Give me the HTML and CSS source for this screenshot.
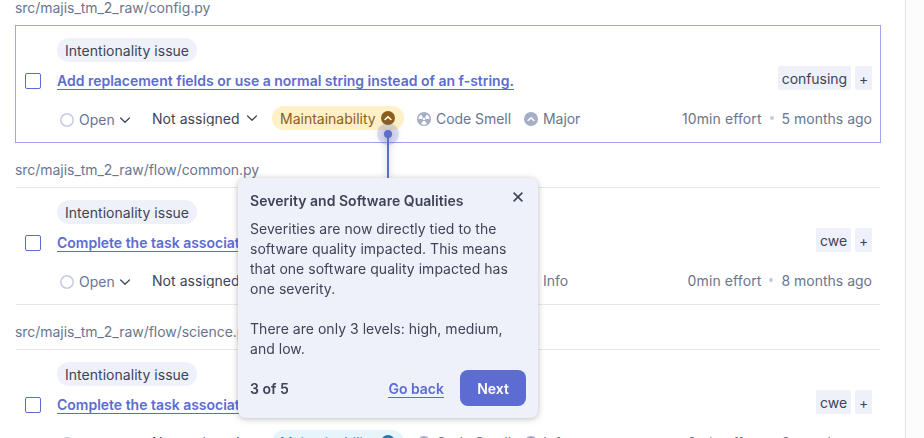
FILE: index.html
```html
<!DOCTYPE html>
<html lang="en">
<head>
<meta charset="utf-8">
<title>Issues</title>
<link rel="stylesheet" href="styles.css">
</head>
<body>
<svg width="0" height="0" class="defs">
  <symbol id="chevron" viewBox="0 0 12 12"><path d="M1.6 4 6 8.3 10.4 4" fill="none" stroke="currentColor" stroke-width="1.2" stroke-linecap="round" stroke-linejoin="round"/></symbol>
  <symbol id="ring" viewBox="0 0 14 14"><circle cx="7" cy="7" r="6.2" fill="none" stroke="currentColor" stroke-width="1.5"/></symbol>
  <symbol id="up" viewBox="0 0 14 14"><circle cx="7" cy="7" r="7" fill="currentColor"/><path d="M4.1 8.5 7 5.8 9.9 8.5" fill="none" stroke="#fff" stroke-width="1.6" stroke-linecap="round" stroke-linejoin="round"/></symbol>
  <symbol id="down" viewBox="0 0 14 14"><circle cx="7" cy="7" r="7" fill="currentColor"/><path d="M4.1 5.7 7 8.4 9.9 5.7" fill="none" stroke="#fff" stroke-width="1.6" stroke-linecap="round" stroke-linejoin="round"/></symbol>
  <symbol id="smell" viewBox="0 0 14 14"><circle cx="7" cy="7" r="7" fill="currentColor"/><g fill="#fff"><path d="M1.4 7a5.6 5.6 0 0 1 2.7-4.6L5.9 5.4A2 2 0 0 0 5 7z"/><path d="M12.6 7a5.6 5.6 0 0 0-2.7-4.6L8.1 5.4A2 2 0 0 1 9 7z"/><path d="M4.2 11.9a5.6 5.6 0 0 0 5.6 0L8 8.8a2 2 0 0 1-2 0z"/><circle cx="7" cy="7" r="1.3"/></g></symbol>
</svg>
<div class="page">
  <main class="issues">
    <section class="group">
      <h2 class="file">src/majis_tm_2_raw/config.py</h2>
      <article class="card selected">
        <span class="check"></span>
        <div class="body">
          <div><span class="clean">Intentionality issue</span></div>
          <div class="heading"><a class="title">Add replacement fields or use a normal string instead of an f-string.</a><div class="tags"><span class="tag">confusing</span><span class="tag plus">+</span></div></div>
          <div class="meta">
            <span class="status"><svg class="ic ring"><use href="#ring"/></svg>Open<svg class="chev"><use href="#chevron"/></svg></span>
            <span class="assignee"><span class="name">Not assigned</span><svg class="chev"><use href="#chevron"/></svg></span>
            <span class="quality medium">Maintainability<svg class="ic"><use href="#up"/></svg></span>
            <span class="kind smell"><svg class="ic"><use href="#smell"/></svg>Code Smell</span>
            <span class="kind"><svg class="ic"><use href="#up"/></svg>Major</span>
            <span class="info"><span class="effort">10min effort</span><i class="sep"></i>5 months ago</span>
          </div>
        </div>
      </article>
    </section>
    <section class="group">
      <h2 class="file">src/majis_tm_2_raw/flow/common.py</h2>
      <article class="card">
        <span class="check"></span>
        <div class="body">
          <div><span class="clean">Intentionality issue</span></div>
          <div class="heading"><a class="title">Complete the task associated to this TODO comment.</a><div class="tags"><span class="tag">cwe</span><span class="tag plus">+</span></div></div>
          <div class="meta">
            <span class="status"><svg class="ic ring"><use href="#ring"/></svg>Open<svg class="chev"><use href="#chevron"/></svg></span>
            <span class="assignee"><span class="name">Not assigned</span><svg class="chev"><use href="#chevron"/></svg></span>
            <span class="quality low">Maintainability<svg class="ic"><use href="#down"/></svg></span>
            <span class="kind smell"><svg class="ic"><use href="#smell"/></svg>Code Smell</span>
            <span class="kind"><svg class="ic"><use href="#down"/></svg>Info</span>
            <span class="info"><span class="effort">0min effort</span><i class="sep"></i>8 months ago</span>
          </div>
        </div>
      </article>
    </section>
    <section class="group">
      <h2 class="file">src/majis_tm_2_raw/flow/science.py</h2>
      <article class="card">
        <span class="check"></span>
        <div class="body">
          <div><span class="clean">Intentionality issue</span></div>
          <div class="heading"><a class="title">Complete the task associated to this TODO comment.</a><div class="tags"><span class="tag">cwe</span><span class="tag plus">+</span></div></div>
          <div class="meta">
            <span class="status"><svg class="ic ring"><use href="#ring"/></svg>Open<svg class="chev"><use href="#chevron"/></svg></span>
            <span class="assignee"><span class="name">Not assigned</span><svg class="chev"><use href="#chevron"/></svg></span>
            <span class="quality low">Maintainability<svg class="ic"><use href="#down"/></svg></span>
            <span class="kind smell"><svg class="ic"><use href="#smell"/></svg>Code Smell</span>
            <span class="kind"><svg class="ic"><use href="#down"/></svg>Info</span>
            <span class="info"><span class="effort">0min effort</span><i class="sep"></i>8 months ago</span>
          </div>
        </div>
      </article>
    </section>
  </main>
  <aside class="gutter"></aside>
</div>
<div class="tour">
  <svg class="pointer" viewBox="0 0 24 56"><circle cx="12" cy="12" r="11" fill="#5d6cd0" fill-opacity=".2"/><circle cx="12" cy="12" r="4" fill="#5d6cd0"/><path d="M12 12V56" stroke="#5d6cd0" stroke-width="2"/></svg>
  <div class="popover">
    <div class="pophead"><strong>Severity and Software Qualities</strong><svg class="close" viewBox="0 0 12 12"><path d="M1.6 1.6 10.4 10.4M10.4 1.6 1.6 10.4" stroke="currentColor" stroke-width="1.6"/></svg></div>
    <p>Severities are now directly tied to the software quality impacted. This means that one software quality impacted has one severity.</p>
    <p>There are only 3 levels: high, medium, and low.</p>
    <div class="actions"><span class="step">3 of 5</span><a class="back">Go back</a><button class="next">Next</button></div>
  </div>
</div>
</body>
</html>
```
FILE: styles.css
```css
* { box-sizing: border-box; }
body { margin: 0; width: 924px; height: 438px; overflow: hidden; background: #fff; color: #3e4357; font: 400 14px/20px Inter, "Liberation Sans", sans-serif; }
.defs { position: absolute; }
.page { display: flex; height: 438px; overflow: hidden; }
.issues { width: 905px; padding: 0 24px 0 15px; }
.gutter { flex: 1; border-left: 1px solid #dfe2f0; background: #fcfcfd; }
.group { height: 162px; }
.group:first-child { height: 160px; margin-top: -2px; margin-bottom: 2px; }
.file { margin: 0; height: 27px; font-size: 14px; line-height: 20px; font-weight: 400; letter-spacing: -.04px; color: #6a7590; }
.card { display: flex; height: 118px; padding: 12px 8px 12px 9px; border: 1px solid transparent; border-top-color: #e6e7ea; border-bottom-color: #e6e7ea; }
.card.selected { border-color: #9da6ea; }
.check { flex: none; width: 16px; height: 16px; margin: 35px 16px 0 0; border: 1px solid #5d6cd0; border-radius: 2px; }
.body { flex: 1; min-width: 0; }
.clean { display: block; width: 140px; height: 24px; padding: 0 8px; border-radius: 12px; line-height: 26px; letter-spacing: .03px; white-space: nowrap; background: #eef1fa; }
.heading { display: flex; justify-content: space-between; align-items: flex-start; height: 44px; padding-top: 4px; }
.title { height: 18px; margin-top: 6px; line-height: 18px; font-weight: 600; letter-spacing: -.01px; color: #5d6cd0; border-bottom: 1px solid #5d6cd0; }
.tags { display: flex; gap: 4px; }
.tag { height: 24px; padding: 0 4px; border-radius: 2px; line-height: 26px; letter-spacing: -.06px; background: #eef1fa; }
.plus { width: 17px; text-align: center; }
.meta { display: flex; align-items: center; height: 24px; color: #6a7590; }
.ic { flex: none; width: 14px; height: 14px; }
.chev { flex: none; width: 12px; height: 12px; color: #3e4357; }
.status { display: flex; align-items: center; width: 95px; height: 24px; padding: 3px 0 0 3px; }
.ring { margin-right: 5px; color: #c4cbe3; }
.status .chev { margin-left: 4px; }
.assignee { display: flex; align-items: center; width: 120px; color: #3e4357; }
.name { width: 88px; height: 16px; margin-right: 6px; overflow: hidden; line-height: 17px; letter-spacing: .05px; white-space: nowrap; }
.quality { display: flex; align-items: center; justify-content: space-between; width: 132px; height: 24px; padding: 2px 9px 0 8px; border-radius: 12px; }
.quality .ic { margin-top: -2px; }
.medium { background: #fff0c7; color: #8c5e1e; }
.low { background: #e6f4fb; color: #2f76a8; }
.kind { display: flex; align-items: center; gap: 5px; height: 24px; padding-top: 2px; letter-spacing: -.05px; }
.kind .ic { margin-top: -1px; color: #a6adc6; }
.smell { width: 107px; margin-left: 13px; }
.info { display: flex; align-items: center; height: 24px; padding-top: 2px; margin-left: auto; }
.effort { letter-spacing: .1px; }
.sep { width: 4px; height: 4px; margin: -3px 8px 0; border-radius: 50%; background: #c4cbe3; }
.tour { position: absolute; left: 238px; top: 122px; width: 300px; height: 296px; filter: drop-shadow(0 1px 3px rgba(30, 32, 45, .3)); }
.pointer { display: block; width: 24px; height: 56px; margin-left: 138px; }
.popover { height: 240px; padding: 12px; border-radius: 8px; background: #eef1fa; }
.pophead { display: flex; justify-content: space-between; height: 28px; line-height: 22px; }
.pophead strong { font-weight: 600; letter-spacing: .03px; }
.close { width: 12px; height: 12px; margin: 1px 2px 0 0; }
.popover p { width: 270px; margin: 0 0 19px; padding-top: 1px; line-height: 20px; letter-spacing: .03px; }
.actions { display: flex; align-items: center; height: 36px; margin-top: -8px; font-weight: 600; }
.step { margin-right: auto; padding-top: 2px; }
.back { height: 19px; margin: 1px 16px 0 0; line-height: 19px; color: #5d6cd0; border-bottom: 1px solid #5d6cd0; }
.next { width: 66px; height: 36px; padding: 2px 0 0; border: 0; border-radius: 8px; background: #5d6cd0; color: #fff; font: inherit; }
```
